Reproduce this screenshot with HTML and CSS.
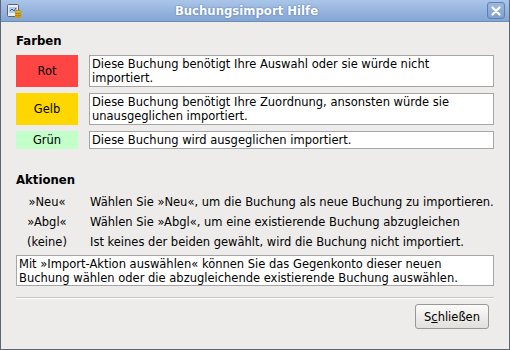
FILE: index.html
```html
<!DOCTYPE html>
<html lang="de">
<head>
  <meta charset="UTF-8" />
  <title>Buchungsimport Hilfe</title>
  <link rel="stylesheet" href="styles.css">
</head>
<body>
  <div class="window">
    <div class="titlebar">
      <span class="app-icon">
        <svg width="16" height="16" viewBox="0 0 16 16">
          <rect x="1.5" y="1.5" width="11" height="12" rx="1" fill="#e8eef6" stroke="#55657a"/>
          <rect x="3" y="4" width="8" height="6" fill="#b9cbe3"/>
          <path d="M4 8l2-2 2 2 2-3" stroke="#3a5a9a" fill="none"/>
          <ellipse cx="12" cy="8.5" rx="3" ry="1.2" fill="#f2c230" stroke="#8a6a10" stroke-width=".6"/>
          <rect x="9" y="8.5" width="6" height="5.5" fill="#e0a810"/>
          <path d="M9 10.5h6M9 12.5h6" stroke="#8a6a10" stroke-width=".6"/>
          <ellipse cx="12" cy="14" rx="3" ry="1.2" fill="#d09a10"/>
        </svg>
      </span>
      <span class="title">Buchungsimport Hilfe</span>
      <span class="close-btn">
        <svg width="10" height="10" viewBox="0 0 10 10"><path d="M1.5 1.5l7 7M8.5 1.5l-7 7" stroke="#fff" stroke-width="2.2" stroke-linecap="round"/></svg>
      </span>
    </div>

    <div class="content">
      <h3>Farben</h3>
      <div class="colors">
        <div class="swatch red">Rot</div>
        <div class="box">Diese Buchung benötigt Ihre Auswahl oder sie würde nicht importiert.</div>
        <div class="swatch yellow">Gelb</div>
        <div class="box">Diese Buchung benötigt Ihre Zuordnung, ansonsten würde sie unausgeglichen importiert.</div>
        <div class="swatch green">Grün</div>
        <div class="box">Diese Buchung wird ausgeglichen importiert.</div>
      </div>

      <h3 class="second">Aktionen</h3>
      <div class="actions">
        <span class="act">»Neu«</span>
        <span>Wählen Sie »Neu«, um die Buchung als neue Buchung zu importieren.</span>
        <span class="act">»Abgl«</span>
        <span>Wählen Sie »Abgl«, um eine existierende Buchung abzugleichen</span>
        <span class="act">(keine)</span>
        <span>Ist keines der beiden gewählt, wird die Buchung nicht importiert.</span>
      </div>
      <div class="box note">Mit »Import-Aktion auswählen« können Sie das Gegenkonto dieser neuen Buchung wählen oder die abzugleichende existierende Buchung auswählen.</div>

      <hr>
      <div class="buttons">
        <button type="button">S<u>c</u>hließen</button>
      </div>
    </div>
  </div>
</body>
</html>
```

FILE: styles.css
```css
html,body{margin:0;padding:0}
body{width:510px;height:350px;overflow:hidden;font-family:"DejaVu Sans",sans-serif;font-size:11.5px;color:#000;background:#edeceb}
.window{box-sizing:border-box;width:510px;height:350px;border:1px solid #5d6675;border-top:none;background:#edeceb}
.titlebar{height:21px;display:flex;align-items:center;padding:0 4px 0 5px;background:linear-gradient(#aac5e8,#84a5d4);border-bottom:1px solid #6f8cb8}
.app-icon{width:16px;height:16px;display:flex}
.title{flex:1;text-align:center;color:#fff;font-weight:bold;font-size:11.7px;text-shadow:0 0 2px #4a6a9c;padding-right:16px}
.close-btn{width:16px;height:15px;display:flex;align-items:center;justify-content:center;border:1px solid #5f7fb0;border-radius:3px;background:linear-gradient(#9cb8df,#7f9fcf)}
.content{padding:12px 15px 0 15px}
h3{margin:0 0 7px;font-size:11.7px;font-weight:bold}
h3.second{margin-top:24px;margin-bottom:8px}
.colors{display:grid;grid-template-columns:62px 1fr;column-gap:11px;row-gap:6px}
.swatch{display:flex;align-items:center;justify-content:center}
.red{background:#ff4444;min-height:31px}
.yellow{background:#ffd700}
.green{background:#c3ffc8}
.box{background:#fff;border:1px solid #a5a5a5;padding:1px 2px 0;line-height:14px;min-height:15px}
.colors .box:not(:last-child){min-height:29px}
.actions{display:grid;grid-template-columns:62px 1fr;column-gap:12px;row-gap:6px;line-height:14px;margin-bottom:6px}
.act{text-align:center}
.note{line-height:14px}
hr{margin:11px 0 0;border:none;border-top:1px solid #c8c6c3;border-bottom:1px solid #fff}
.buttons{display:flex;justify-content:flex-end;padding:5px 5px 0 0}
button{font-family:inherit;font-size:11.5px;height:25px;padding:0 8px;border:1px solid #9a9894;border-radius:3px;background:linear-gradient(#fbfbfa,#e1dfdc);color:#000}
button u{text-decoration:underline}
```
